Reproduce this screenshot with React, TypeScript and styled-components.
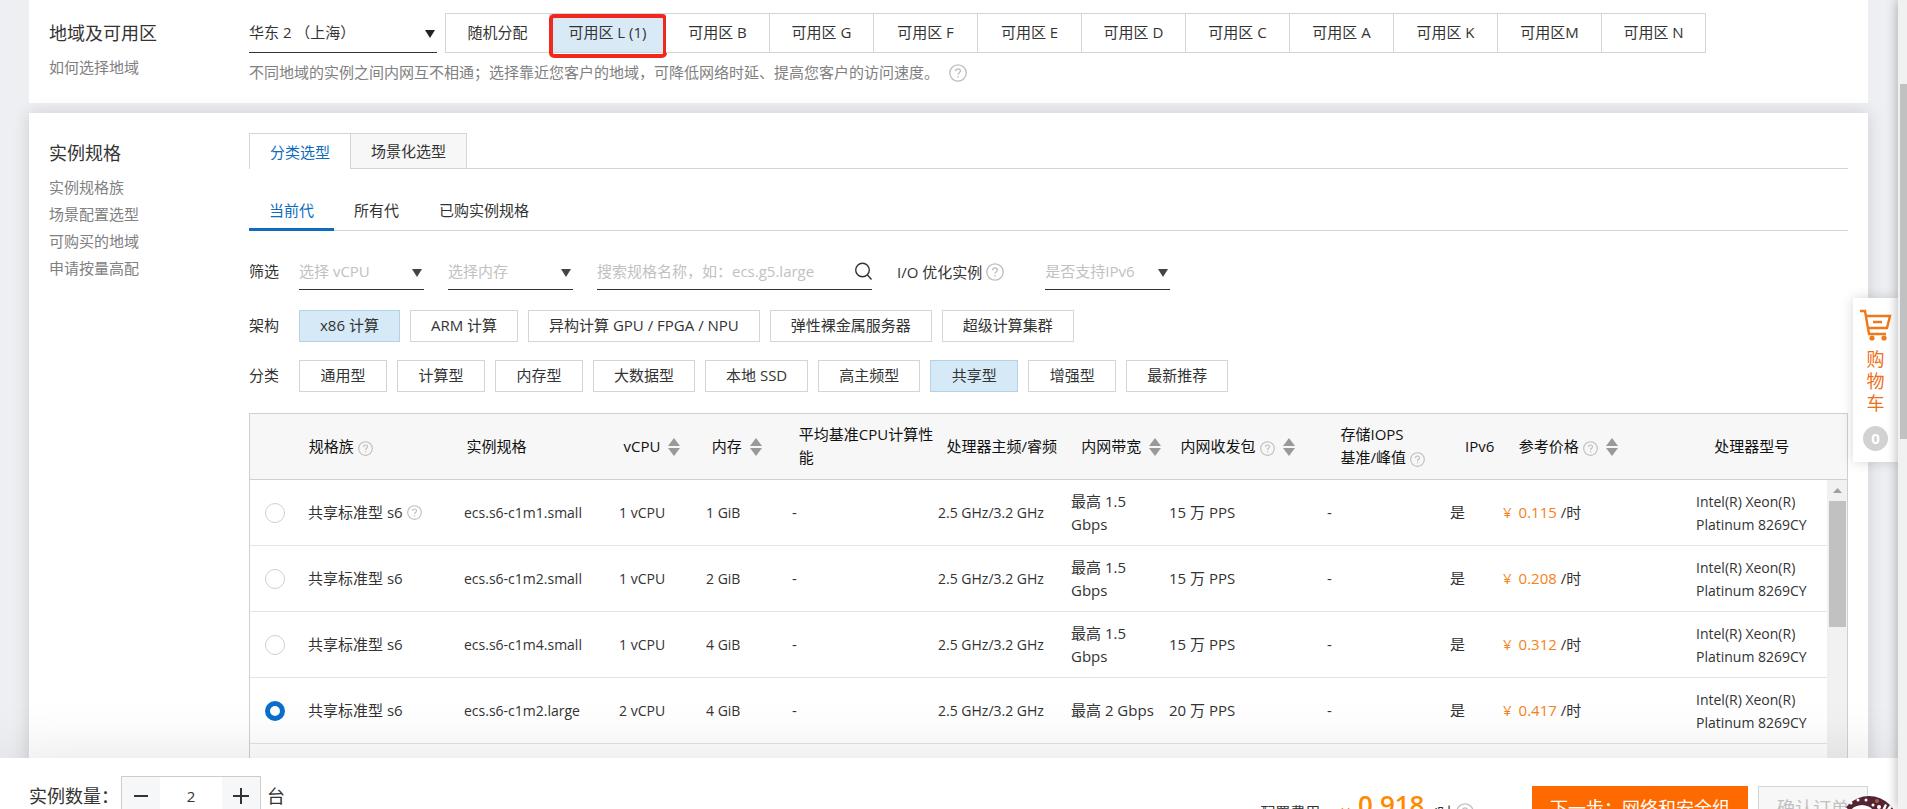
import React, { useState } from 'react';
import styled, { createGlobalStyle } from 'styled-components';

const GlobalStyle = createGlobalStyle`
  * { box-sizing: border-box; }
  body {
    margin: 0;
    overflow: hidden;
    background: #eeeff3;
    color: #333;
    font: 15px/23px 'Open Sans', 'Noto Sans CJK SC', sans-serif;
  }
  button, input, select { font: inherit; color: inherit; margin: 0; }
  button { cursor: pointer; }
`;

const Shell = styled.div`
  display: flex;
  height: 100vh;
  overflow: hidden;
`;

const Viewport = styled.div`
  flex: 1;
  min-width: 0;
  display: flex;
  flex-direction: column;
  position: relative;
`;

const PageScrollbar = styled.div`
  flex: 0 0 9px;
  padding: 84px 0 0 2px;
  background: #f1f1f1;
  box-shadow: 0 0 12px rgba(0, 0, 0, 0.35);
  position: relative;
`;

const PageThumb = styled.div`
  height: 355px;
  background: #c1c1c1;
`;

const Main = styled.main`
  flex: 1;
  min-height: 0;
  overflow: hidden;
  padding: 0 30px 0 29px;
  display: flex;
  flex-direction: column;
  gap: 10px;
`;

const Card = styled.section<{ $raised?: boolean }>`
  display: flex;
  flex-shrink: 0;
  background: #fff;
  padding: ${(p) => (p.$raised ? '20px 20px 40px' : '13px 20px 19px')};
  box-shadow: ${(p) => (p.$raised ? '0 0 16px rgba(0, 0, 0, 0.14)' : 'none')};
`;

const Aside = styled.div`
  flex: 0 0 200px;
  padding-top: 7px;
  display: flex;
  flex-direction: column;
  align-items: flex-start;
`;

const Title = styled.h2`
  margin: 0 0 7px;
  font-size: 18px;
  line-height: 27px;
  font-weight: 400;
`;

const AsideLink = styled.a`
  color: #808080;
  line-height: 27px;
  text-decoration: none;
`;

const Body = styled.div`
  flex: 1;
  min-width: 0;
`;

const Row = styled.div<{ $top?: number; $gap?: number }>`
  display: flex;
  align-items: center;
  margin-top: ${(p) => p.$top ?? 0}px;
  gap: ${(p) => p.$gap ?? 0}px;
`;

const SelectBox = styled.div<{ $width: number; $tall?: boolean }>`
  position: relative;
  width: ${(p) => p.$width}px;
  height: ${(p) => (p.$tall ? 40 : 36)}px;
  border-bottom: 1px solid #333;
`;

const NativeSelect = styled.select<{ $muted?: boolean }>`
  appearance: none;
  width: 100%;
  height: 100%;
  padding: 0 24px 1px 0;
  border: 0;
  outline: 0;
  background: transparent;
  color: ${(p) => (p.$muted ? '#c1c1c1' : '#333')};
`;

const Caret = styled.svg`
  position: absolute;
  right: 2px;
  top: 50%;
  margin-top: -3px;
  pointer-events: none;
`;

const ZoneGroup = styled.div`
  display: flex;
  margin-left: 8px;
  border-left: 1px solid #d5d5d5;
`;

const ZoneButton = styled.button<{ $active?: boolean }>`
  position: relative;
  min-width: ${(p) => (p.$active ? 116 : 104)}px;
  height: 40px;
  padding: 0 0 2px;
  border: 1px solid #d5d5d5;
  border-left: 0;
  background: ${(p) => (p.$active ? '#d9eaf7' : '#fff')};
`;

const Highlight = styled.span`
  position: absolute;
  inset: 0 -2px -6px -1px;
  border: 4px solid #f0281e;
  border-radius: 5px;
  pointer-events: none;
`;

const Hint = styled.p`
  display: flex;
  align-items: center;
  gap: 10px;
  margin: 8px 0 0;
  color: #808080;
`;

const TabBar = styled.div`
  display: flex;
  border-bottom: 1px solid #d5d5d5;
`;

const Tab = styled.button<{ $active?: boolean }>`
  height: ${(p) => (p.$active ? 36 : 35)}px;
  margin-bottom: ${(p) => (p.$active ? -1 : 0)}px;
  padding: 1px 20px 0;
  border: 1px solid #d5d5d5;
  border-bottom: 0;
  background: ${(p) => (p.$active ? '#fff' : '#f7f7f7')};
  color: ${(p) => (p.$active ? '#0f6cbd' : '#333')};
  & + & { border-left: 0; }
`;

const SubTab = styled.button<{ $active?: boolean }>`
  height: 39px;
  margin-bottom: -1px;
  padding: 0 20px;
  border: 0;
  border-bottom: 3px solid ${(p) => (p.$active ? '#0f6cbd' : 'transparent')};
  background: none;
  color: ${(p) => (p.$active ? '#0f6cbd' : '#333')};
`;

const SubTabBar = styled(TabBar)`
  margin-top: 23px;
`;

const RowLabel = styled.label`
  width: 50px;
  padding-bottom: 1px;
`;

const RowName = styled.span`
  width: 50px;
  padding-bottom: 2px;
`;

const FilterRow = styled(Row)`
  margin-top: 23px;
`;

const SearchBox = styled.div`
  display: flex;
  align-items: center;
  width: 275px;
  height: 36px;
  padding-bottom: 1px;
  border-bottom: 1px solid #333;
`;

const SearchInput = styled.input`
  flex: 1;
  min-width: 0;
  border: 0;
  outline: 0;
  padding: 0;
  background: transparent;
  &::placeholder { color: #c1c1c1; opacity: 1; }
`;

const IconButton = styled.button`
  display: flex;
  padding: 0;
  border: 0;
  background: none;
`;

const Spacer = styled.span<{ $width: number }>`
  flex: 0 0 ${(p) => p.$width}px;
`;

const Chips = styled.div`
  display: flex;
  flex-wrap: wrap;
  gap: 10px;
`;

const Chip = styled.button<{ $active?: boolean }>`
  height: 32px;
  min-width: 88px;
  padding: 0 20px 2px;
  border: 1px solid ${(p) => (p.$active ? '#b3d1e8' : '#d5d5d5')};
  background: ${(p) => (p.$active ? '#d5e9f7' : '#fff')};
`;

const TableFrame = styled.div`
  margin-top: 21px;
  border: 1px solid #d0d0d0;
`;

const Table = styled.table`
  width: 100%;
  table-layout: fixed;
  border-collapse: separate;
  border-spacing: 0;
`;

const HeadCell = styled.th`
  height: 66px;
  padding: 0 0 2px 7px;
  border-bottom: 1px solid #d0d0d0;
  background: #f7f7f7;
  color: #111;
  text-align: left;
  font-weight: 400;
`;

const HeadText = styled.span`
  display: inline-flex;
  align-items: flex-end;
  gap: 4px;
  vertical-align: middle;
`;

const HeadIcon = styled.span`
  display: flex;
  margin-bottom: 2px;
`;

const SortIcon = styled.svg`
  margin: 0 0 2px 4px;
`;

const BodyScroll = styled.div`
  display: flex;
  align-items: flex-start;
  height: 400px;
  overflow: hidden;
`;

const Cell = styled.td<{ $latin?: boolean }>`
  height: 66px;
  padding: 0 0 0 7px;
  border-bottom: 1px solid #e3e3e3;
  font-size: ${(p) => (p.$latin ? 14 : 15)}px;
`;

const Inline = styled.label`
  display: inline-flex;
  align-items: center;
  gap: 4px;
`;

const Radio = styled.input`
  appearance: none;
  display: block;
  width: 20px;
  height: 20px;
  margin: 0 0 0 8px;
  border: 1px solid #d0d0d0;
  border-radius: 50%;
  background: #fff;
  &:checked { border: 5px solid #0a6ecb; }
`;

const Price = styled.span`
  color: #f58220;
`;

const Yen = styled.span`
  margin-right: 7px;
`;

const TableScrollbar = styled.div`
  flex: 0 0 21px;
  align-self: stretch;
  display: flex;
  flex-direction: column;
  align-items: center;
  background: #f1f1f1;
`;

const ScrollUp = styled.button`
  height: 21px;
  padding: 0;
  border: 0;
  background: none;
  display: flex;
  align-items: center;
`;

const TableThumb = styled.div`
  width: 17px;
  height: 126px;
  background: #c1c1c1;
`;

const Footer = styled.footer`
  flex: 0 0 51px;
  min-height: 0;
  height: 51px;
  display: flex;
  align-items: flex-start;
  padding: 0 30px 0 29px;
  background: #fff;
  font-size: 18px;
  box-shadow: 0 0 60px rgba(0, 0, 0, 0.12);
  position: relative;
  white-space: nowrap;
`;

const Quantity = styled.div`
  display: flex;
  align-items: center;
  margin-top: 18px;
`;

const Stepper = styled.div`
  display: flex;
  width: 140px;
  height: 40px;
  margin: 0 6px 0 2px;
  border: 1px solid #ccc;
`;

const StepButton = styled.button`
  flex: 0 0 38px;
  display: flex;
  align-items: center;
  justify-content: center;
  padding: 0;
  border: 0;
  background: #f6f7f9;
`;

const StepInput = styled.input`
  flex: 1;
  min-width: 0;
  border: 0;
  padding: 0;
  text-align: center;
  font-size: 15px;
`;

const Cost = styled.div`
  display: flex;
  align-items: center;
  margin: 29px 58px 0 auto;
  font-size: 15px;
  line-height: 34px;
`;

const CostValue = styled.strong`
  margin: 0 7px 16px 8px;
  color: #ff8a00;
  font-size: 26px;
  font-weight: 600;
`;

const ActionButton = styled.button<{ $primary?: boolean }>`
  height: 48px;
  margin: 28px 0 0 ${(p) => (p.$primary ? 0 : 10)}px;
  padding: 0 18px 3px;
  border: ${(p) => (p.$primary ? '0' : '1px solid #d5d5d5')};
  background: ${(p) => (p.$primary ? '#ff6a00' : '#f7f7f7')};
  color: ${(p) => (p.$primary ? '#fff' : '#c1c1c1')};
`;

const CartPanel = styled.button`
  position: absolute;
  right: 0;
  top: 298px;
  width: 45px;
  height: 164px;
  padding: 11px 0 0;
  display: flex;
  flex-direction: column;
  align-items: center;
  border: 0;
  background: #fff;
  box-shadow: 0 0 12px rgba(0, 0, 0, 0.16);
  color: #ee6f16;
  font-size: 18px;
  line-height: 22px;
`;

const CartText = styled.span`
  width: 18px;
  margin: 7px 0 12px;
`;

const CartBadge = styled.span`
  width: 25px;
  height: 25px;
  border-radius: 50%;
  background: #d2d2d2;
  color: #fff;
  font-size: 15px;
  font-weight: 700;
  line-height: 25px;
`;

const Assistant = styled.svg`
  position: absolute;
  right: 0;
  top: 38px;
`;

const Help = ({ size = 18 }: { size?: number }) => (
  <svg width={size} height={size} viewBox="0 0 18 18" fill="none" stroke="#bdbdbd" strokeWidth="1.3" aria-hidden="true">
    <circle cx="9" cy="9" r="8.2" />
    <path d="M6.6 7.2c0-1.5 1-2.4 2.4-2.4s2.4.9 2.4 2.2c0 1.7-2.3 1.8-2.3 3.7M9.1 12v1.5" />
  </svg>
);

const Sort = () => (
  <SortIcon width="12" height="18" viewBox="0 0 12 18" fill="#999" aria-hidden="true">
    <path d="M6 0l6 8H0zM6 18l6-8H0z" />
  </SortIcon>
);

const Dropdown = ({ id, label, text, width, muted, tall }: {
  id: string; label: string; text: string; width: number; muted?: boolean; tall?: boolean;
}) => (
  <SelectBox $width={width} $tall={tall}>
    <NativeSelect id={id} aria-label={label} $muted={muted}>
      <option>{text}</option>
    </NativeSelect>
    <Caret width="10" height="8" viewBox="0 0 10 8" fill={tall ? '#222' : '#444'} aria-hidden="true">
      <path d="M0 0h10L5 8z" />
    </Caret>
  </SelectBox>
);

const zones = ['随机分配', '可用区 L (1)', '可用区 B', '可用区 G', '可用区 F', '可用区 E', '可用区 D', '可用区 C', '可用区 A', '可用区 K', '可用区M', '可用区 N'];
const architectures = ['x86 计算', 'ARM 计算', '异构计算 GPU / FPGA / NPU', '弹性裸金属服务器', '超级计算集群'];
const categories = ['通用型', '计算型', '内存型', '大数据型', '本地 SSD', '高主频型', '共享型', '增强型', '最新推荐'];
const columnWidths = [51, 156, 155, 87, 86, 146, 133, 98, 158, 123, 53, 193, 138];

const headers: { text: React.ReactNode; help?: boolean; sort?: boolean }[] = [
  { text: '' },
  { text: '规格族', help: true },
  { text: '实例规格' },
  { text: 'vCPU', sort: true },
  { text: '内存', sort: true },
  { text: '平均基准CPU计算性能' },
  { text: '处理器主频/睿频' },
  { text: '内网带宽', sort: true },
  { text: '内网收发包', help: true, sort: true },
  { text: <>存储IOPS<br />基准/峰值</>, help: true },
  { text: 'IPv6' },
  { text: '参考价格', help: true, sort: true },
  { text: '处理器型号' },
];

const specs = [
  { name: 'ecs.s6-c1m1.small', cpu: '1 vCPU', mem: '1 GiB', net: '最高 1.5 Gbps', pps: '15 万 PPS', price: '0.115', help: true },
  { name: 'ecs.s6-c1m2.small', cpu: '1 vCPU', mem: '2 GiB', net: '最高 1.5 Gbps', pps: '15 万 PPS', price: '0.208' },
  { name: 'ecs.s6-c1m4.small', cpu: '1 vCPU', mem: '4 GiB', net: '最高 1.5 Gbps', pps: '15 万 PPS', price: '0.312' },
  { name: 'ecs.s6-c1m2.large', cpu: '2 vCPU', mem: '4 GiB', net: '最高 2 Gbps', pps: '20 万 PPS', price: '0.417' },
];

const Columns = () => (
  <colgroup>
    {columnWidths.map((w, i) => <col key={i} style={{ width: w }} />)}
  </colgroup>
);

export default function App() {
  const [zone, setZone] = useState('可用区 L (1)');
  const [arch, setArch] = useState('x86 计算');
  const [category, setCategory] = useState('共享型');
  const [spec, setSpec] = useState('ecs.s6-c1m2.large');
  const [count, setCount] = useState(2);

  return (
    <Shell>
      <GlobalStyle />
      <Viewport>
        <Main>
          <Card>
            <Aside>
              <Title>地域及可用区</Title>
              <AsideLink href="#region">如何选择地域</AsideLink>
            </Aside>
            <Body>
              <Row>
                <Dropdown id="region" label="地域" text="华东 2 （上海）" width={188} tall />
                <ZoneGroup>
                  {zones.map((z) => (
                    <ZoneButton key={z} $active={z === zone} aria-pressed={z === zone} onClick={() => setZone(z)}>
                      {z}
                      {z === zone && <Highlight />}
                    </ZoneButton>
                  ))}
                </ZoneGroup>
              </Row>
              <Hint>
                不同地域的实例之间内网互不相通；选择靠近您客户的地域，可降低网络时延、提高您客户的访问速度。
                <Help />
              </Hint>
            </Body>
          </Card>

          <Card $raised>
            <Aside>
              <Title>实例规格</Title>
              <AsideLink href="#family">实例规格族</AsideLink>
              <AsideLink href="#scene">场景配置选型</AsideLink>
              <AsideLink href="#available">可购买的地域</AsideLink>
              <AsideLink href="#apply">申请按量高配</AsideLink>
            </Aside>
            <Body>
              <TabBar>
                <Tab $active>分类选型</Tab>
                <Tab>场景化选型</Tab>
              </TabBar>
              <SubTabBar>
                <SubTab $active>当前代</SubTab>
                <SubTab>所有代</SubTab>
                <SubTab>已购实例规格</SubTab>
              </SubTabBar>

              <FilterRow>
                <RowLabel htmlFor="vcpu">筛选</RowLabel>
                <Dropdown id="vcpu" label="vCPU" text="选择 vCPU" width={125} muted />
                <Spacer $width={24} />
                <Dropdown id="memory" label="内存" text="选择内存" width={125} muted />
                <Spacer $width={24} />
                <SearchBox>
                  <SearchInput aria-label="搜索规格名称" placeholder="搜索规格名称，如：ecs.g5.large" />
                  <IconButton aria-label="搜索">
                    <svg width="18" height="18" viewBox="0 0 18 18" fill="none" stroke="#333" strokeWidth="1.4">
                      <circle cx="8.500" cy="8" r="6.8" />
                      <path d="M13.500 13l4 4.5" />
                    </svg>
                  </IconButton>
                </SearchBox>
                <Spacer $width={25} />
                <Row $gap={4}>I/O 优化实例<Help /></Row>
                <Spacer $width={41} />
                <Dropdown id="ipv6" label="是否支持IPv6" text="是否支持IPv6" width={125} muted />
              </FilterRow>

              <Row $top={20} role="group" aria-label="架构">
                <RowName>架构</RowName>
                <Chips>
                  {architectures.map((a) => (
                    <Chip key={a} $active={a === arch} aria-pressed={a === arch} onClick={() => setArch(a)}>{a}</Chip>
                  ))}
                </Chips>
              </Row>
              <Row $top={18} role="group" aria-label="分类">
                <RowName>分类</RowName>
                <Chips>
                  {categories.map((c) => (
                    <Chip key={c} $active={c === category} aria-pressed={c === category} onClick={() => setCategory(c)}>{c}</Chip>
                  ))}
                </Chips>
              </Row>

              <TableFrame>
                <Table>
                  <Columns />
                  <thead>
                    <tr>
                      {headers.map((h, i) => (
                        <HeadCell key={i}>
                          <HeadText>
                            <span>{h.text}</span>
                            {h.help && <HeadIcon><Help size={15} /></HeadIcon>}
                            {h.sort && <Sort />}
                          </HeadText>
                        </HeadCell>
                      ))}
                    </tr>
                  </thead>
                </Table>
                <BodyScroll>
                  <Table>
                    <Columns />
                    <tbody>
                      {specs.map((s) => (
                        <tr key={s.name}>
                          <Cell>
                            <Radio type="radio" name="spec" id={s.name} checked={s.name === spec} onChange={() => setSpec(s.name)} />
                          </Cell>
                          <Cell>
                            <Inline htmlFor={s.name}>共享标准型 s6{s.help && <Help size={15} />}</Inline>
                          </Cell>
                          <Cell $latin>{s.name}</Cell>
                          <Cell $latin>{s.cpu}</Cell>
                          <Cell $latin>{s.mem}</Cell>
                          <Cell>-</Cell>
                          <Cell $latin>2.5 GHz/3.2 GHz</Cell>
                          <Cell>{s.net}</Cell>
                          <Cell>{s.pps}</Cell>
                          <Cell>-</Cell>
                          <Cell>是</Cell>
                          <Cell><Price><Yen>¥</Yen>{s.price}</Price> /时</Cell>
                          <Cell $latin>Intel(R) Xeon(R)<br />Platinum 8269CY</Cell>
                        </tr>
                      ))}
                    </tbody>
                  </Table>
                  <TableScrollbar>
                    <ScrollUp aria-label="向上滚动">
                      <svg width="9" height="5" viewBox="0 0 9 5" fill="#a0a0a0"><path d="M4.5 0L9 5H0z" /></svg>
                    </ScrollUp>
                    <TableThumb />
                  </TableScrollbar>
                </BodyScroll>
              </TableFrame>
            </Body>
          </Card>
        </Main>

        <Footer>
          <Quantity>
            <label htmlFor="count">实例数量：</label>
            <Stepper>
              <StepButton aria-label="减少" onClick={() => setCount(Math.max(1, count - 1))}>
                <svg width="14" height="14" viewBox="0 0 14 14" stroke="#333" strokeWidth="2"><path d="M0 7h14" /></svg>
              </StepButton>
              <StepInput id="count" value={count} onChange={(e) => setCount(Number(e.target.value) || 1)} />
              <StepButton aria-label="增加" onClick={() => setCount(count + 1)}>
                <svg width="16" height="16" viewBox="0 0 16 16" stroke="#333" strokeWidth="2"><path d="M0 8h16M8 0v16" /></svg>
              </StepButton>
            </Stepper>
            台
          </Quantity>
          <Cost>
            配置费用
            <Spacer $width={21} />
            <Price>¥</Price>
            <CostValue>0.918</CostValue>
            /时
            <Spacer $width={4} />
            <Help />
          </Cost>
          <ActionButton $primary>下一步：网络和安全组</ActionButton>
          <ActionButton disabled>确认订单</ActionButton>
          <Assistant width="58" height="58" viewBox="0 0 58 58" aria-hidden="true">
            <circle cx="29" cy="29" r="29" fill="#552433" />
            <ellipse cx="22" cy="29" rx="17" ry="20" fill="#fff" />
            <ellipse cx="22" cy="29" rx="13" ry="16" fill="#552433" />
            <ellipse cx="22" cy="31" rx="10" ry="16" fill="#f6eef0" />
            <circle cx="37" cy="5" r="2" fill="#a5603c" />
            <g fill="#fff">
              <circle cx="6" cy="13" r="1.5" />
              <circle cx="11" cy="7" r="1.5" />
              <circle cx="18" cy="4" r="1.5" />
              <circle cx="26" cy="4" r="1.5" />
              <circle cx="33" cy="9" r="1.5" />
              <circle cx="39" cy="11" r="2" />
              <path d="M42 14l3-6 2 1-2 5zM47 13l3-4 2 2-3 4z" />
            </g>
          </Assistant>
        </Footer>

        <CartPanel>
          <svg width="32" height="32" viewBox="0 0 32 32" fill="none" stroke="#f07818" strokeWidth="2.4" aria-hidden="true">
            <path d="M0 2h5l4 23h17M6 7h24l-3 12H8M13 13h9" />
            <g fill="#f07818" stroke="none">
              <circle cx="12" cy="29" r="2.6" />
              <circle cx="24" cy="29" r="2.6" />
            </g>
          </svg>
          <CartText>购物车</CartText>
          <CartBadge>0</CartBadge>
        </CartPanel>
      </Viewport>
      <PageScrollbar><PageThumb /></PageScrollbar>
    </Shell>
  );
}
